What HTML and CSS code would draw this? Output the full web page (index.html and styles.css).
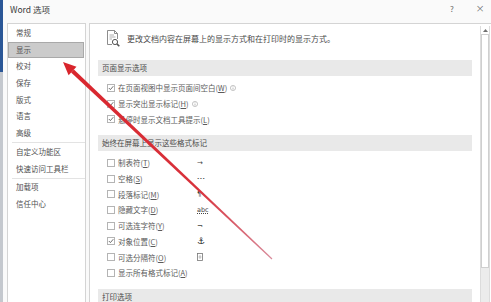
FILE: index.html
```html
<!DOCTYPE html>
<html lang="zh-CN">
<head>
  <meta charset="UTF-8">
  <meta name="viewport" content="width=device-width, initial-scale=1.0">
  <title>Word 选项</title>
  <link rel="stylesheet" href="styles.css">
</head>
<body>
  <div class="screen">
    <div class="edge"><div class="edge-blue"></div></div>
    <div class="dialog">
      <div class="titlebar">
        <span class="title">Word 选项</span>
        <span class="tb-btn help">?</span>
        <span class="tb-btn close">×</span>
      </div>
      <div class="body">
        <ul class="nav">
          <li>常规</li>
          <li class="active">显示</li>
          <li>校对</li>
          <li>保存</li>
          <li>版式</li>
          <li>语言</li>
          <li>高级</li>
          <li class="sep"></li>
          <li>自定义功能区</li>
          <li>快速访问工具栏</li>
          <li class="sep"></li>
          <li>加载项</li>
          <li>信任中心</li>
        </ul>
        <div class="main">
          <div class="content">
            <div class="intro">
              <svg class="intro-icon" width="14" height="17" viewBox="0 0 14 17">
                <path d="M6 14.5H1.5V0.5H8.5L11.5 3.5V9" fill="none" stroke="#808080" stroke-width="0.9"/>
                <path d="M8.5 0.5V3.5H11.5" fill="none" stroke="#808080" stroke-width="0.9"/>
                <path d="M3.5 5H8M3.5 7H9.5M3.5 9H6" stroke="#9a9a9a" stroke-width="0.8"/>
                <circle cx="9" cy="12" r="2.6" fill="#fff" stroke="#555" stroke-width="1"/>
                <path d="M10.9 13.9L13.3 16.3" stroke="#555" stroke-width="1.5"/>
              </svg>
              <span>更改文档内容在屏幕上的显示方式和在打印时的显示方式。</span>
            </div>

            <div class="section">
              <div class="band">页面显示选项</div>
              <ul class="opts">
                <li>
                  <span class="box"><svg viewBox="0 0 6 6"><polyline points="0.8,3 2.4,4.6 5.3,1.2"/></svg></span>
                  <span class="label">在页面视图中显示页面间空白(<u>W</u>)</span>
                  <svg class="info" viewBox="0 0 7 7"><circle cx="3.5" cy="3.5" r="3"/><path d="M3.5 3V5.4M3.5 1.6V2.3"/></svg>
                </li>
                <li>
                  <span class="box"><svg viewBox="0 0 6 6"><polyline points="0.8,3 2.4,4.6 5.3,1.2"/></svg></span>
                  <span class="label">显示突出显示标记(<u>H</u>)</span>
                  <svg class="info" viewBox="0 0 7 7"><circle cx="3.5" cy="3.5" r="3"/><path d="M3.5 3V5.4M3.5 1.6V2.3"/></svg>
                </li>
                <li>
                  <span class="box"><svg viewBox="0 0 6 6"><polyline points="0.8,3 2.4,4.6 5.3,1.2"/></svg></span>
                  <span class="label">悬停时显示文档工具提示(<u>L</u>)</span>
                </li>
              </ul>
            </div>

            <div class="section">
              <div class="band">始终在屏幕上显示这些格式标记</div>
              <ul class="opts marks">
                <li><span class="box"></span><span class="label">制表符(<u>T</u>)</span><span class="mark">→</span></li>
                <li><span class="box"></span><span class="label">空格(<u>S</u>)</span><span class="mark dots">•••</span></li>
                <li><span class="box"></span><span class="label">段落标记(<u>M</u>)</span><span class="mark">¶</span></li>
                <li><span class="box"></span><span class="label">隐藏文字(<u>D</u>)</span><span class="mark abc">abc</span></li>
                <li><span class="box"></span><span class="label">可选连字符(<u>Y</u>)</span><span class="mark">¬</span></li>
                <li>
                  <span class="box"><svg viewBox="0 0 6 6"><polyline points="0.8,3 2.4,4.6 5.3,1.2"/></svg></span>
                  <span class="label">对象位置(<u>C</u>)</span><span class="mark anchor">⚓</span>
                </li>
                <li>
                  <span class="box"></span><span class="label">可选分隔符(<u>O</u>)</span>
                  <svg class="mark-break" viewBox="0 0 6 8"><rect x="0.5" y="0.5" width="5" height="7"/><path d="M1.5 4H4.5M3 2V6"/></svg>
                </li>
                <li><span class="box"></span><span class="label">显示所有格式标记(<u>A</u>)</span></li>
              </ul>
            </div>

            <div class="section">
              <div class="band">打印选项</div>
            </div>
          </div>
          <div class="scrollbar">
            <div class="sb-up"><svg width="5" height="3" viewBox="0 0 5 3"><polygon points="0,3 2.5,0 5,3" fill="#707070"/></svg></div>
            <div class="sb-thumb"></div>
            <div class="sb-track"></div>
          </div>
        </div>
      </div>
    </div>

    <!-- red pointer arrow drawn on top -->
    <svg class="annot" width="491" height="302" viewBox="0 0 491 302">
      <defs>
        <linearGradient id="arrowRed" gradientUnits="userSpaceOnUse" x1="63" y1="62" x2="272" y2="259">
          <stop offset="0" stop-color="#d9252c"/>
          <stop offset="0.65" stop-color="#d8323c"/>
          <stop offset="1" stop-color="#d88a9a"/>
        </linearGradient>
      </defs>
      <polygon points="71.1,72.4 73.9,69.4 272.4,258.6 271.6,259.4" fill="url(#arrowRed)"/>
      <polygon points="63,62 68.6,75.2 76.5,66.8" fill="#d9252c"/>
    </svg>
  </div>
</body>
</html>
```

FILE: styles.css
```css
* {
  box-sizing: border-box;
}
html, body {
  margin: 0;
}
body {
  width: 491px;
  height: 302px;
  overflow: hidden;
  background: #fafafa;
  font-family: "Noto Sans CJK SC", "Noto Sans", sans-serif;
  color: #555;
}
.screen {
  position: relative;
  display: flex;
  height: 302px;
}

/* strip of the window behind the dialog */
.edge {
  width: 3px;
  background: #c4c8ce;
}
.edge-blue {
  height: 72px;
  background: #2b5797;
}

.dialog {
  flex: 1;
  display: flex;
  flex-direction: column;
  background: #fafafa;
}
.titlebar {
  height: 23px;
  display: flex;
  align-items: flex-start;
  padding-left: 7px;
  padding-right: 1px;
}
.title {
  line-height: 18px;
  font-size: 8.5px;
  color: #3a3a3a;
}
.tb-btn {
  line-height: 18px;
  text-align: center;
  color: #666;
}
.help {
  margin-left: auto;
  width: 16px;
  font-size: 8px;
  margin-right: 10px;
}
.close {
  width: 20px;
  font-size: 11px;
  font-family: "DejaVu Sans", sans-serif;
  font-weight: 300;
}

.body {
  flex: 1;
  display: flex;
  gap: 3px;
  padding-left: 4px;
  min-height: 0;
}

/* left category list */
.nav {
  width: 79px;
  margin: 0;
  padding: 1px 0 0;
  list-style: none;
  background: #fff;
  border: 1px solid #d4d4d4;
  border-bottom: none;
  font-size: 7.5px;
  color: #505050;
}
.nav li {
  height: 16.7px;
  line-height: 16.7px;
  padding-left: 8px;
}
.nav li.active {
  margin-right: 1px;
  line-height: 14.7px;
  padding-left: 7px;
  background: #cbcbcb;
  border: 1px solid #a9a9a9;
}
.nav li.sep {
  height: 1px;
  margin: 0.5px 0 0.5px 4px;
  padding: 0;
  background: #e3e3e3;
}

/* right options pane */
.main {
  flex: 1;
  display: flex;
  background: #fff;
  border-left: 1px solid #d4d4d4;
  border-top: 1px solid #d4d4d4;
}
.content {
  flex: 1;
  padding: 0 8px;
  overflow: hidden;
}
.intro {
  height: 28px;
  display: flex;
  align-items: center;
  gap: 7px;
  padding-left: 8px;
  margin-bottom: 8px;
  font-size: 8px;
  color: #4a4a4a;
}
.intro-icon {
  flex: none;
}
.section {
  margin-bottom: 8px;
}
.band {
  height: 16px;
  line-height: 16px;
  padding-left: 4px;
  background: #e9e9e9;
  font-size: 7.5px;
  color: #4a4a4a;
}
.opts {
  list-style: none;
  margin: 0;
  padding: 4px 0 0;
}
.opts li {
  height: 15.7px;
  display: flex;
  align-items: center;
  padding-left: 9px;
  font-size: 7.5px;
  color: #5a5a5a;
}
.box {
  flex: none;
  width: 8px;
  height: 8px;
  margin-right: 3px;
  display: flex;
  align-items: center;
  justify-content: center;
  background: #fff;
  border: 1px solid #b4b4b4;
}
.box svg {
  width: 6px;
  height: 6px;
}
.box polyline {
  fill: none;
  stroke: #606060;
  stroke-width: 0.9;
}
.info {
  width: 6px;
  height: 6px;
  margin-left: 3px;
}
.info circle {
  fill: none;
  stroke: #a0a0a0;
  stroke-width: 0.7;
}
.info path {
  stroke: #a0a0a0;
  stroke-width: 0.8;
}
u {
  text-decoration-thickness: 0.5px;
  text-underline-offset: 1px;
}

.marks .label {
  width: 79px;
}
.mark {
  font-family: "DejaVu Sans", sans-serif;
  font-size: 7px;
  color: #444;
}
.mark.dots {
  font-size: 4px;
  letter-spacing: 0.4px;
}
.mark.abc {
  font-size: 6.5px;
  text-decoration: underline dotted;
  text-decoration-thickness: 0.5px;
}
.mark.anchor {
  font-size: 9px;
  color: #1a1a1a;
  font-weight: bold;
}
.mark-break {
  width: 6px;
  height: 8px;
}
.mark-break rect {
  fill: none;
  stroke: #777;
  stroke-width: 0.8;
}
.mark-break path {
  stroke: #999;
  stroke-width: 0.6;
}

/* vertical scrollbar */
.scrollbar {
  width: 10px;
  margin: 2px 1px 0 0;
  display: flex;
  flex-direction: column;
  border-left: 1px solid #dcdcdc;
  border-right: 1px solid #dcdcdc;
}
.sb-up {
  height: 8px;
  display: flex;
  align-items: center;
  justify-content: center;
}
.sb-thumb {
  height: 234px;
  background: #fff;
  border: 1px solid #cfcfcf;
}
.sb-track {
  flex: 1;
  background: #ececec;
}

.annot {
  position: absolute;
  top: 0;
  left: 0;
  pointer-events: none;
}
```
